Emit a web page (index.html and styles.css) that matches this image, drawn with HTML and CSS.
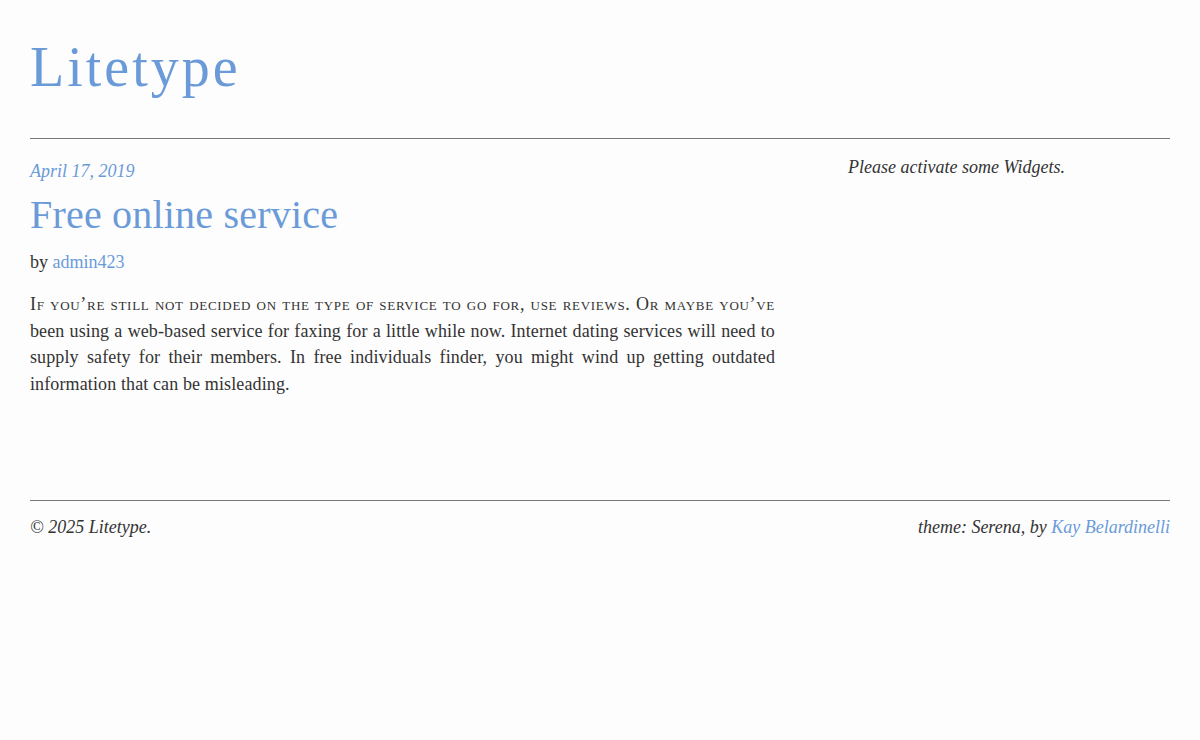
FILE: index.html
```html
<!DOCTYPE html>
<html>
<head>
<meta charset="utf-8">
<title>Litetype</title>
<link rel="stylesheet" href="styles.css">
</head>
<body>
<div class="page">
  <header class="site-header">
    <h1 class="site-title"><a href="#">Litetype</a></h1>
  </header>
  <div class="content">
    <main class="main">
      <article class="post">
        <div class="post-date"><a href="#">April 17, 2019</a></div>
        <h2 class="post-title"><a href="#">Free online service</a></h2>
        <div class="post-author">by <a href="#">admin423</a></div>
        <p class="post-body">If you’re still not decided on the type of service to go for, use reviews. Or maybe you’ve been using a web-based service for faxing for a little while now. Internet dating services will need to supply safety for their members. In free individuals finder, you might wind up getting outdated information that can be misleading.</p>
      </article>
    </main>
    <aside class="sidebar">
      <p class="widget-note">Please activate some Widgets.</p>
    </aside>
  </div>
  <footer class="site-footer">
    <span class="copy">© 2025 Litetype.</span>
    <span class="credit">theme: Serena, by <a href="#">Kay Belardinelli</a></span>
  </footer>
</div>
</body>
</html>
```

FILE: styles.css
```css
html, body {
  margin: 0;
  padding: 0;
  background: #fdfdfd;
}
body {
  font-family: "Liberation Serif", "Times New Roman", serif;
  color: #333;
  font-size: 18px;
}
a {
  color: #6a9bd8;
  text-decoration: none;
}
.page {
  padding: 0 30px;
}
.site-header {
  padding-top: 34px;
  padding-bottom: 37px;
  border-bottom: 1px solid #777;
}
.site-title {
  margin: 0;
  font-weight: normal;
  font-size: 56px;
  line-height: 67px;
  letter-spacing: 3px;
}
.content {
  display: flex;
  justify-content: space-between;
  padding-bottom: 102px;
  border-bottom: 1px solid #777;
}
.main {
  width: 745px;
}
.sidebar {
  width: 322px;
  padding-top: 15px;
}
.widget-note {
  margin: 0;
  font-style: italic;
  line-height: 26px;
}
.post-date {
  margin-top: 19px;
  font-style: italic;
  line-height: 26px;
}
.post-title {
  margin: 7px 0 0;
  font-weight: normal;
  font-size: 40px;
  line-height: 48px;
  letter-spacing: 0.2px;
}
.post-author {
  margin-top: 10px;
  line-height: 26px;
}
.post-body {
  margin: 16px 0 0;
  line-height: 26.7px;
  text-align: justify;
  letter-spacing: 0.12px;
}
.post-body::first-line {
  font-variant: small-caps;
  letter-spacing: 0.7px;
}
.site-footer {
  display: flex;
  justify-content: space-between;
  padding-top: 13px;
  font-style: italic;
  line-height: 26px;
}
```
